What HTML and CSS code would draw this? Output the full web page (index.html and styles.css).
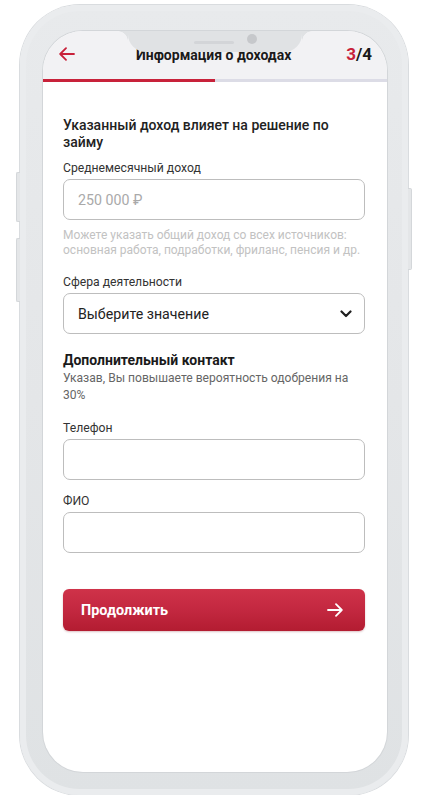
FILE: index.html
```html
<!DOCTYPE html>
<html lang="ru">
<head>
<meta charset="utf-8">
<title>Информация о доходах</title>
<link rel="stylesheet" href="styles.css">
</head>
<body>
<div class="device">
  <span class="key key-left-1"></span>
  <span class="key key-left-2"></span>
  <span class="key key-right"></span>
  <div class="screen">
    <div class="notch"><span class="speaker"></span><span class="camera"></span></div>
    <header class="topbar">
      <button class="back" aria-label="Назад">
        <svg width="16" height="14" viewBox="0 0 16 14" fill="none" stroke="currentColor" stroke-width="1.8" stroke-linecap="round" stroke-linejoin="round"><path d="M15 7H1.5M7 1.2L1.2 7 7 12.8"/></svg>
      </button>
      <h1 class="title">Информация о доходах</h1>
      <div class="step"><span class="step-current">3</span>/4</div>
    </header>
    <div class="progress"><div class="progress-fill"></div></div>

    <form class="form">
      <p class="lead">Указанный доход влияет на решение по займу</p>

      <label class="label label-first">Среднемесячный доход</label>
      <div class="field"><span class="placeholder">250 000 ₽</span></div>
      <p class="hint">Можете указать общий доход со всех источников: основная работа, подработки, фриланс, пенсия и др.</p>

      <label class="label label-wide">Сфера деятельности</label>
      <div class="field select">
        <span class="select-value">Выберите значение</span>
        <svg width="12" height="8" viewBox="0 0 12 8" fill="none" stroke="#1f1f1f" stroke-width="2.2" stroke-linecap="round" stroke-linejoin="round"><path d="M1.5 1.5L6 6l4.5-4.5"/></svg>
      </div>

      <h2 class="section">Дополнительный контакт</h2>
      <p class="note">Указав, Вы повышаете вероятность одобрения на 30%</p>

      <label class="label label-wide">Телефон</label>
      <div class="field"></div>

      <label class="label label-gap">ФИО</label>
      <div class="field"></div>

      <button type="button" class="submit">
        <span>Продолжить</span>
        <svg width="16" height="14" viewBox="0 0 16 14" fill="none" stroke="#fff" stroke-width="1.8" stroke-linecap="round" stroke-linejoin="round"><path d="M1 7h13.5M9 1.2L14.8 7 9 12.8"/></svg>
      </button>
    </form>
  </div>
</div>
</body>
</html>
```

FILE: styles.css
```css
* { box-sizing: border-box; }

html, body {
  margin: 0;
  background: #ffffff;
}

body {
  padding: 5px 0 0 20px;
  font-family: Roboto, "Noto Sans", "Liberation Sans", sans-serif;
  color: #222;
}

/* phone body */
.device {
  position: relative;
  width: 388px;
  height: 790px;
  padding: 26px 21px 23px 23px;
  border-radius: 60px;
  background: linear-gradient(180deg, #e8eaec 0%, #e4e6e8 50%, #dfe2e4 100%);
  box-shadow: 0 0 0 1px #d9dcdf, inset 0 0 0 6px #eaecee;
}

.key {
  position: absolute;
  width: 4px;
  background: #e4e6e8;
  border: 1px solid #d4d7da;
}
.key-left-1 { left: -4px; top: 167px; height: 50px; border-right: 0; border-radius: 2px 0 0 2px; }
.key-left-2 { left: -4px; top: 233px; height: 64px; border-right: 0; border-radius: 2px 0 0 2px; }
.key-right { right: -4px; top: 183px; height: 82px; border-left: 0; border-radius: 0 2px 2px 0; }

/* display */
.screen {
  position: relative;
  display: flex;
  flex-direction: column;
  width: 344px;
  height: 741px;
  border-radius: 40px;
  overflow: hidden;
  background: #fff;
  box-shadow: 0 0 0 1px #d3d6d9;
}

.notch {
  position: absolute;
  top: 0;
  left: 85px;
  width: 174px;
  height: 21px;
  background: #e0e2e4;
  border-radius: 0 0 18px 18px;
  z-index: 2;
}
.notch::before,
.notch::after {
  content: "";
  position: absolute;
  top: 0;
  width: 10px;
  height: 10px;
}
.notch::before {
  left: -10px;
  background: radial-gradient(circle at 0 100%, transparent 9.5px, #e0e2e4 10px);
}
.notch::after {
  right: -10px;
  background: radial-gradient(circle at 100% 100%, transparent 9.5px, #e0e2e4 10px);
}
.speaker {
  position: absolute;
  left: 66px;
  top: 10px;
  width: 40px;
  height: 3px;
  border-radius: 2px;
  background: #d3d5d8;
}
.camera {
  position: absolute;
  left: 119px;
  top: 3px;
  width: 10px;
  height: 10px;
  border-radius: 50%;
  background: #c6c8cb;
}

/* header */
.topbar {
  display: flex;
  align-items: center;
  height: 48px;
  padding: 0 15px 2px 16px;
  background: #f2f2f4;
}
.back {
  display: flex;
  padding: 0;
  border: 0;
  background: none;
  color: #c8213a;
}
.title {
  flex: 1;
  margin: 1px 0 0;
  text-align: center;
  font-size: 14px;
  font-weight: 700;
  color: #1a1a1a;
  padding-left: 6px;
}
.step {
  font-size: 17px;
  font-weight: 700;
  color: #1a1a1a;
}
.step-current { color: #c8213a; }

.progress {
  height: 3px;
  background: #dcdce6;
}
.progress-fill {
  width: 50%;
  height: 100%;
  background: #c8223a;
}

/* form */
.form {
  display: flex;
  flex-direction: column;
  padding: 35px 22px 0 20px;
}

.lead {
  margin: 0;
  font-size: 14px;
  font-weight: 500;
  line-height: 17px;
  color: #222;
}

.label {
  font-size: 12.2px;
  line-height: 16px;
  color: #333;
  margin-bottom: 3px;
}
.label-first { margin-top: 9px; }
.label-gap { margin-top: 13px; }
.label-wide { margin-top: 16px; }

.field {
  display: flex;
  align-items: center;
  height: 41px;
  padding: 0 14px;
  border: 1px solid #bdbdbd;
  border-radius: 7px;
  background: #fff;
}
.placeholder {
  font-size: 14.2px;
  color: #a9a9a9;
}

.hint {
  margin: 8px 0 0;
  font-size: 12px;
  line-height: 15px;
  color: #c2c2c2;
}

.select { justify-content: space-between; padding-right: 12px; }
.select-value {
  font-size: 14.2px;
  color: #222;
}

.section {
  margin: 17px 0 0;
  font-size: 14px;
  font-weight: 700;
  line-height: 18px;
  color: #1a1a1a;
}
.note {
  margin: 1px 0 0;
  font-size: 12.1px;
  line-height: 17px;
  color: #666;
}

.submit {
  display: flex;
  align-items: center;
  justify-content: space-between;
  height: 42px;
  margin-top: 36px;
  padding: 0 22px 0 18px;
  border: 0;
  border-radius: 6px;
  background: linear-gradient(180deg, #cf3249 0%, #c32840 50%, #b31c31 100%);
  color: #fff;
  font-family: inherit;
  font-size: 14.4px;
  font-weight: 700;
  box-shadow: 0 1px 2px rgba(120, 10, 25, 0.25);
}
```
